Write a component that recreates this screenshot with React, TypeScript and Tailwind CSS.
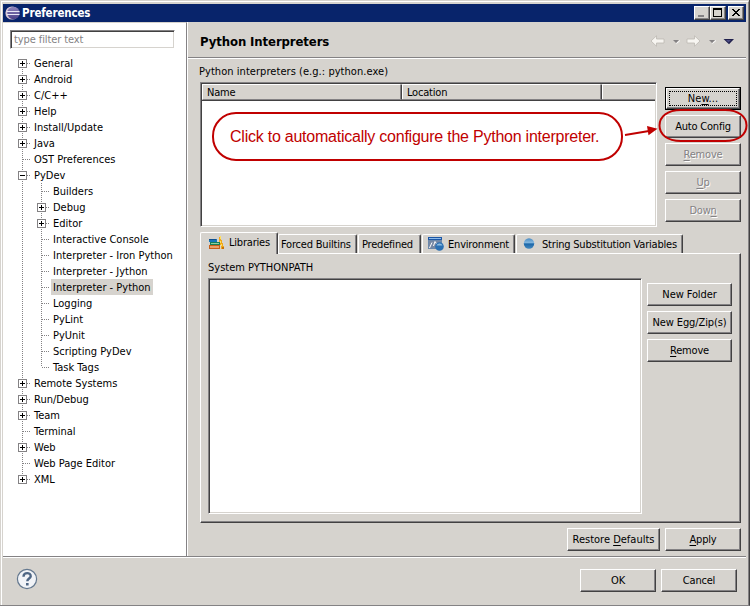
import React from "react";

const RAISED =
  "border border-t-white border-l-white border-r-[#424142] border-b-[#424142] shadow-[inset_-1px_-1px_0_#848284]";
const SUNKEN =
  "border border-t-[#848284] border-l-[#848284] border-r-white border-b-white shadow-[inset_1px_1px_0_#424142,inset_-1px_-1px_0_#d6d3ce] bg-white";

type TreeItem = { label: string; level?: number; box?: "+" | "-"; selected?: boolean };

const ITEMS: TreeItem[] = [
  { label: "General", box: "+" },
  { label: "Android", box: "+" },
  { label: "C/C++", box: "+" },
  { label: "Help", box: "+" },
  { label: "Install/Update", box: "+" },
  { label: "Java", box: "+" },
  { label: "OST Preferences" },
  { label: "PyDev", box: "-" },
  { label: "Builders", level: 1 },
  { label: "Debug", level: 1, box: "+" },
  { label: "Editor", level: 1, box: "+" },
  { label: "Interactive Console", level: 1 },
  { label: "Interpreter - Iron Python", level: 1 },
  { label: "Interpreter - Jython", level: 1 },
  { label: "Interpreter - Python", level: 1, selected: true },
  { label: "Logging", level: 1 },
  { label: "PyLint", level: 1 },
  { label: "PyUnit", level: 1 },
  { label: "Scripting PyDev", level: 1 },
  { label: "Task Tags", level: 1 },
  { label: "Remote Systems", box: "+" },
  { label: "Run/Debug", box: "+" },
  { label: "Team", box: "+" },
  { label: "Terminal" },
  { label: "Web", box: "+" },
  { label: "Web Page Editor" },
  { label: "XML", box: "+" },
];

function Branch({ item, root, first, last }: { item: TreeItem; root?: boolean; first?: boolean; last?: boolean }) {
  const box = root ? undefined : item.box;
  return (
    <svg className="h-4 w-[19px] shrink-0" viewBox="0 0 19 16" shapeRendering="crispEdges" fill="none">
      {!first && <path d="M7.5 0V8" stroke="#848284" strokeDasharray="1 1" />}
      {!last && <path d="M7.5 8V16" stroke="#848284" strokeDasharray="1 1" />}
      {!root && <path d="M8 8.5H16" stroke="#848284" strokeDasharray="1 1" />}
      {box && (
        <>
          <rect x="3.5" y="4.5" width="8" height="8" fill="#fff" stroke="#848284" />
          <path d="M5 8.5H10" stroke="#000" />
          {box === "+" && <path d="M7.5 6V11" stroke="#000" />}
        </>
      )}
    </svg>
  );
}

function TreeRow({ item, index }: { item: TreeItem; index: number }) {
  const next = ITEMS[index + 1];
  const lastRoot = index === ITEMS.length - 1;
  return (
    <div className="flex h-4 items-center">
      <Branch item={item} root={item.level === 1} first={index === 0} last={lastRoot} />
      {item.level === 1 && <Branch item={item} last={!next || next.level !== 1} />}
      <span
        className={`h-4 pr-[2px] leading-[17px] ${item.level === 1 ? "-ml-[2px] pl-[2px]" : ""} ${
          item.selected ? "bg-[#d6d3ce]" : ""
        }`}
      >
        {item.label}
      </span>
    </div>
  );
}

function Btn({ children, className = "", disabled }: { children: React.ReactNode; className?: string; disabled?: boolean }) {
  return (
    <button
      className={`flex h-[23px] shrink-0 items-center justify-center bg-[#d6d3ce] leading-none ${RAISED} ${
        disabled ? "text-[#848284] [text-shadow:1px_1px_0_#fff]" : ""
      } ${className}`}
    >
      <span className="whitespace-nowrap">{children}</span>
    </button>
  );
}

const U = ({ children }: { children: string }) => <span className="underline underline-offset-2">{children}</span>;

function EclipseLogo() {
  return (
    <svg className="h-4 w-4" viewBox="0 0 16 16">
      <defs>
        <linearGradient id="ecl" x1="0" y1="0" x2="0" y2="1">
          <stop offset="0" stopColor="#8f86bd" />
          <stop offset="1" stopColor="#4a3f88" />
        </linearGradient>
      </defs>
      <circle cx="7" cy="8" r="6.600" fill="#d8c5d3" />
      <circle cx="8.500" cy="8" r="6.200" fill="url(#ecl)" />
      <path d="M1.500 6.500H14.500M1.500 9.500H14.500" stroke="#e8e8f6" />
    </svg>
  );
}

function BooksIcon() {
  return (
    <svg className="h-4 w-4" viewBox="0 0 16 16" shapeRendering="crispEdges">
      <path d="M0 3h8v3H0z" fill="#1878b8" />
      <path d="M0 3h7v1H0z" fill="#105090" />
      <path d="M1 6h10v3H1z" fill="#188058" />
      <path d="M2 7h8v1H2z" fill="#8cd0a0" />
      <path d="M0 9h11v4H0z" fill="#c86018" />
      <path d="M1 10h9v2H1z" fill="#e8a068" />
      <path d="M10 1h2v3h1v3h1v3h1v3h-3V9h-1V6h-1z" fill="#f0a818" />
      <path d="M11 0h1v3h-1zM11 5h1v2h-1zM12 8h1v2h-1z" fill="#ffe060" />
      <path d="M13 11h2v2h-2z" fill="#c87008" />
    </svg>
  );
}

function EnvIcon() {
  return (
    <svg className="h-4 w-4" viewBox="0 0 16 16">
      <path d="M0 1h14v12H0z" fill="#6c88aa" />
      <path d="M0 1h14v3H0z" fill="#1c56a4" />
      <path d="M1 2h12v1H1z" fill="#8dbcec" />
      <path d="M1 5h11v7H1z" fill="#7688a4" />
      <path d="M1.500 12 4 6.500M5.500 10 7 5.500l2 3" stroke="#fff" fill="none" />
      <circle cx="11.500" cy="10.500" r="4.300" fill="#2b70b3" />
      <path d="M8.500 9.500a3.200 3.200 0 0 1 6 0z" fill="#8cbce2" />
    </svg>
  );
}

function DotIcon() {
  return (
    <svg className="h-4 w-4" viewBox="0 0 16 16">
      <defs>
        <linearGradient id="dot" x1="0" y1="0" x2="0" y2="1">
          <stop offset="0" stopColor="#4a8cc4" />
          <stop offset=".4" stopColor="#82b6de" />
          <stop offset=".55" stopColor="#1c68aa" />
          <stop offset="1" stopColor="#4488be" />
        </linearGradient>
      </defs>
      <circle cx="8" cy="7.500" r="5.200" fill="url(#dot)" />
    </svg>
  );
}

function Tab({ children, className }: { children: React.ReactNode; className: string }) {
  return (
    <div
      className={`flex shrink-0 items-center whitespace-nowrap rounded-t-[2px] border-t border-l border-r border-t-white border-l-white border-r-[#424142] bg-[#d6d3ce] shadow-[inset_-1px_0_0_#848284] ${className}`}
    >
      {children}
    </div>
  );
}

function NavArrows() {
  return (
    <svg className="h-4 w-[90px]" viewBox="0 0 90 16">
      <path d="M1 8 6.500 2.800V6H14v4H6.500v3.200z" fill="#f7f5f1" stroke="#bdb9b2" strokeWidth=".8" />
      <path d="M23 7h6l-3 3z" fill="#848284" />
      <path d="M26.500 10.500 30 7.500" stroke="#fff" />
      <path d="M50 8 44.500 2.800V6H37v4h7.500v3.200z" fill="#f7f5f1" stroke="#bdb9b2" strokeWidth=".8" />
      <path d="M59 7h6l-3 3z" fill="#848284" />
      <path d="M62.500 10.500 66 7.500" stroke="#fff" />
      <path d="M73.500 6h10.500l-5 5.200z" fill="#20204c" />
      <path d="M76 7h5l-2.500 2.500z" fill="#4b4b84" />
    </svg>
  );
}

function WinBtn({ children, className = "" }: { children: React.ReactNode; className?: string }) {
  return (
    <span className={`flex h-[14px] w-4 bg-[#d6d3ce] ${RAISED} ${className}`}>
      <svg className="h-3 w-[14px]" viewBox="0 0 14 12" shapeRendering="crispEdges" fill="none">
        {children}
      </svg>
    </span>
  );
}

export default function App() {
  return (
    <div className="relative flex h-[606px] w-[750px] flex-col overflow-hidden border-r border-b border-r-[#424142] border-b-[#848284] bg-[#d6d3ce] pt-px font-['DejaVu_Sans_Condensed','DejaVu_Sans',sans-serif] text-[11px] tracking-[-0.2px] text-black [font-stretch:condensed]">
      <div className="ml-px flex min-h-0 grow flex-col border-t border-l border-r border-t-white border-l-white border-r-[#848284] pt-[2px] pr-[2px] pl-px">
        <div className="flex h-[18px] shrink-0 items-center bg-[#08246b] pr-[2px] pl-[2px] text-white">
          <EclipseLogo />
          <span className="ml-px grow pt-px text-[11.5px] font-bold tracking-[-0.15px]">Preferences</span>
          <WinBtn><path d="M3 9H9" stroke="#848284" strokeWidth="2" /></WinBtn>
          <WinBtn>
            <path d="M2 2H11" stroke="#000" strokeWidth="2" />
            <path d="M2.500 1V9.500H10.500V1" stroke="#000" />
          </WinBtn>
          <WinBtn className="ml-[2px]">
            <path d="M3 2h2v1h1v1h2V3h1V2h2v1h-1v1H9v1H8v1h1v1h1v1h1v1H9V8H8V7H6v1H5v1H3V8h1V7h1V6h1V5H5V4H4V3H3z" fill="#000" />
          </WinBtn>
        </div>

        <div className="flex h-[535px] shrink-0 border-b border-b-[#848284]">
          <aside className="flex w-[184px] shrink-0 flex-col border-t border-r border-t-[#d6d3ce] border-r-[#848284] bg-white pt-[7px]">
            <div className={`ml-[7px] flex h-[19px] w-[165px] items-center pt-px pl-[3px] tracking-[-0.1px] text-[#848284] ${SUNKEN}`}>type filter text</div>
            <div className="mt-[6px] ml-3 flex flex-col tracking-[0px]">
              {ITEMS.map((it, i) => (
                <TreeRow key={it.label} item={it} index={i} />
              ))}
            </div>
          </aside>

          <main className="flex min-w-0 grow flex-col border-l border-l-white">
            <header className="flex h-9 shrink-0 items-center border-b border-b-[#848284] pt-[3px] pr-[6px] pl-3">
              <h1 className="grow pt-px text-[13px] font-bold tracking-[-0.1px]">Python Interpreters</h1>
              <NavArrows />
            </header>
            <div className="flex grow flex-col border-t border-t-white pr-[5px] pl-3">
              <div className="mt-[5px] -ml-px h-[17px] leading-[16px] tracking-[0.05px]">Python interpreters (e.g.: python.exe)</div>
              <div className="mt-[1px] flex h-[145px] gap-2">
                <div className={`flex w-[457px] flex-col p-px ${SUNKEN}`}>
                  <div className="flex h-[17px] border-b border-b-[#424142] bg-[#d6d3ce] leading-[16px]">
                    <div className="flex w-[199px] border border-t-white border-r-[#848284] border-b-[#848284] border-l-white pl-1">Name</div>
                    <div className="flex w-[200px] border border-t-white border-r-[#848284] border-b-[#848284] border-l-[#424142] pl-[5px] shadow-[inset_1px_0_0_#fff]">Location</div>
                    <div className="flex grow border-t border-b border-l border-t-white border-b-[#848284] border-l-[#424142] shadow-[inset_1px_0_0_#fff]" />
                  </div>
                </div>
                <div className="flex w-[76px] flex-col gap-[5px] pt-[5px]">
                  <div className="flex border border-black">
                    <div className={`flex h-[21px] w-[74px] p-[2px] ${RAISED}`}>
                      <button className="flex grow items-center justify-center border border-dotted border-black leading-none tracking-[0.1px]"><span>Ne<U>w</U>...</span></button>
                    </div>
                  </div>
                  <Btn>Auto Config</Btn>
                  <Btn disabled><U>R</U>emove</Btn>
                  <Btn disabled><U>U</U>p</Btn>
                  <Btn disabled>Dow<U>n</U></Btn>
                </div>
              </div>

              <div className="mt-[5px] flex h-[21px] items-end">
                <Tab className="z-10 -mb-px h-[22px] w-[78px] pl-2"><BooksIcon /><span className="ml-[4px]">Libraries</span></Tab>
                <Tab className="h-[19px] w-[79px] pt-[2px] pl-[2px]">Forced Builtins</Tab>
                <Tab className="ml-px h-[19px] w-[63px] pt-[2px] pl-[3px]">Predefined</Tab>
                <Tab className="ml-px h-[19px] w-[93px] pl-[5px]"><EnvIcon /><span className="ml-[4px] pt-[2px]">Environment</span></Tab>
                <Tab className="ml-px h-[19px] w-[167px] pl-[4px]"><DotIcon /><span className="ml-[5px] pt-[2px]">String Substitution Variables</span></Tab>
              </div>
              <section className={`flex h-[270px] w-[541px] flex-col pt-[6px] pl-[7px] ${RAISED}`}>
                <div className="h-4 leading-4 tracking-[0px]">System PYTHONPATH</div>
                <div className="mt-[2px] flex gap-[5px]">
                  <div className={`h-[236px] w-[434px] ${SUNKEN}`} />
                  <div className="flex w-[85px] flex-col gap-[5px] pt-[5px]">
                    <Btn className="tracking-[-0.1px]">New Folder</Btn>
                    <Btn className="tracking-[-0.1px]">New Egg/Zip(s)</Btn>
                    <Btn><U>R</U>emove</Btn>
                  </div>
                </div>
              </section>
              <div className="mt-[5px] flex justify-end gap-[5px]">
                <Btn className="w-[93px] tracking-[0px]">Restore <U>D</U>efaults</Btn>
                <Btn className="w-[76px]"><U>A</U>pply</Btn>
              </div>
            </div>
          </main>
        </div>

        <footer className="flex grow items-start border-t border-t-white pt-[11px] pr-[9px] pl-[13px]">
          <svg className="-mt-[1px] h-[22px] w-[22px]" viewBox="0 0 22 22">
            <circle cx="11" cy="11" r="9.600" fill="#f1f3f7" stroke="#64788f" strokeWidth="1.200" />
            <path d="M7.500 8.700C7.500 3.800 15 4.200 14.700 8.300 14.500 10.600 11.300 10.500 11.300 13.300" fill="none" stroke="#4e6684" strokeWidth="2.400" />
            <path d="M10 15h2.600v2.500H10z" fill="#4e6684" />
          </svg>
          <div className="flex grow justify-end gap-[5px]">
            <Btn className="w-[76px]">OK</Btn>
            <Btn className="w-[76px]">Cancel</Btn>
          </div>
        </footer>
      </div>

      <div className="absolute top-[112px] left-[212px] flex h-[49px] w-[411px] items-center rounded-[24px] border-2 border-[#c00000] bg-white pt-px pl-4 font-['Liberation_Sans',Arial,sans-serif] text-[16px] tracking-[-0.235px] whitespace-nowrap text-[#c00000]">
        Click to automatically configure the Python interpreter.
      </div>
      <svg className="absolute top-[105px] left-[620px] h-10 w-[130px]" viewBox="620 105 130 40" fill="none">
        <path d="M625 135 649 131" stroke="#c00000" strokeWidth="1.800" />
        <path d="M647 126 657.500 128.700 648.500 135.300z" fill="#c00000" />
        <path d="M681 110H725C739 110 746.500 117 746.500 125.500S739 141 725 141H681C667 141 659.500 134 659.500 125.500S667 110 681 110Z" stroke="#c00000" strokeWidth="2" />
      </svg>
    </div>
  );
}
